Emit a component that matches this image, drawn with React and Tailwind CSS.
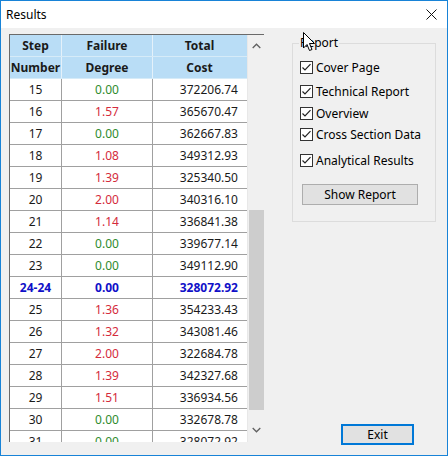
import React from 'react'

const rows = [
  ['15', '0.00', '372206.74', 'g'],
  ['16', '1.57', '365670.47', 'r'],
  ['17', '0.00', '362667.83', 'g'],
  ['18', '1.08', '349312.93', 'r'],
  ['19', '1.39', '325340.50', 'r'],
  ['20', '2.00', '340316.10', 'r'],
  ['21', '1.14', '336841.38', 'r'],
  ['22', '0.00', '339677.14', 'g'],
  ['23', '0.00', '349112.90', 'g'],
  ['24-24', '0.00', '328072.92', 'b'],
  ['25', '1.36', '354233.43', 'r'],
  ['26', '1.32', '343081.46', 'r'],
  ['27', '2.00', '322684.78', 'r'],
  ['28', '1.39', '342327.68', 'r'],
  ['29', '1.51', '336934.56', 'r'],
  ['30', '0.00', '332678.78', 'g'],
  ['31', '0.00', '328072.92', 'g'],
]

const options = [
  ['Cover Page', 'h-[24px]'],
  ['Technical Report', 'h-[22px]'],
  ['Overview', 'h-[21px]'],
  ['Cross Section Data', 'h-[26px]'],
  ['Analytical Results', 'h-[26px]'],
]

function Check() {
  return (
    <svg width="13" height="13" viewBox="0 0 13 13" className="shrink-0">
      <rect x="0.5" y="0.5" width="12" height="12" fill="#fff" stroke="#333" />
      <path d="M2.5 6.5 L5 9 L10.5 3.2" fill="none" stroke="#222" strokeWidth="1.2" />
    </svg>
  )
}

function HeaderRow({ cells }) {
  return (
    <div className="flex h-[22px] shrink-0 bg-[#b9ddf6] font-bold text-[#1a1a1a] border-b border-[#d6ebf8]">
      <div className="w-[52px] flex items-center justify-center border-r border-[#e4f1fa]">{cells[0]}</div>
      <div className="w-[91px] flex items-center justify-center border-r border-[#e4f1fa]">{cells[1]}</div>
      <div className="w-[93px] flex items-center justify-center">{cells[2]}</div>
    </div>
  )
}

export default function App() {
  return (
    <div
      className="relative w-[448px] h-[456px] border border-[#1883d7] bg-[#f0f0f0] flex flex-col overflow-hidden text-[12px] text-black"
      style={{ fontFamily: '"Noto Sans", "Open Sans", sans-serif' }}
    >
      {/* title bar */}
      <div className="h-[27px] bg-white flex items-center justify-between pl-[5px] pr-[10px] shrink-0">
        <span className="text-[12px]">Results</span>
        <svg width="11" height="11" viewBox="0 0 11 11">
          <path d="M0.5 0.5 L10.5 10.5 M10.5 0.5 L0.5 10.5" stroke="#111" strokeWidth="1" />
        </svg>
      </div>

      <div className="flex flex-1 min-h-0 pl-[8px] pt-[6px] pb-[10px]">
        {/* grid */}
        <div className="w-[255px] h-[408px] flex border-t border-l border-[#6a6a6a] bg-white overflow-hidden">
          <div className="w-[237px] flex flex-col overflow-hidden">
            <HeaderRow cells={['Step', 'Failure', 'Total']} />
            <HeaderRow cells={['Number', 'Degree', 'Cost']} />
            {rows.map(([step, deg, cost, c]) => {
              const bold = c === 'b'
              const degColor = c === 'g' ? 'text-[#2e8b2e]' : c === 'r' ? 'text-[#d42b3c]' : 'text-[#1010c8]'
              return (
                <div
                  key={step}
                  className={`flex h-[22px] shrink-0 border-b border-[#a0a0a0] ${bold ? 'font-bold text-[#1010c8]' : 'text-[#1a1a1a]'}`}
                >
                  <div className="w-[52px] flex items-center justify-center border-r border-[#a0a0a0]">{step}</div>
                  <div className={`w-[91px] flex items-center justify-center border-r border-[#a0a0a0] ${degColor}`}>{deg}</div>
                  <div className="w-[93px] flex items-center justify-end pr-[8px]">{cost}</div>
                </div>
              )
            })}
          </div>
          {/* scrollbar */}
          <div className="w-[17px] bg-[#f0f0f0] border-l border-[#e8e8e8] flex flex-col items-center">
            <div className="h-[17px] w-full flex items-center justify-center mt-[2px]">
              <svg width="9" height="6" viewBox="0 0 9 6">
                <path d="M0.7 5 L4.5 1.2 L8.3 5" fill="none" stroke="#606060" strokeWidth="1.3" />
              </svg>
            </div>
            <div className="mt-[156px] w-[15px] h-[200px] bg-[#cdcdcd]" />
            <div className="flex-1" />
            <div className="h-[17px] w-full flex items-center justify-center mb-[4px]">
              <svg width="9" height="6" viewBox="0 0 9 6">
                <path d="M0.7 1 L4.5 4.8 L8.3 1" fill="none" stroke="#606060" strokeWidth="1.3" />
              </svg>
            </div>
          </div>
        </div>

        {/* right panel */}
        <div className="flex-1 flex flex-col pl-[28px] pr-[10px]">
          <div className="relative mt-[9px] h-[179px] w-[144px] border border-[#dcdcdc] pt-[17px] pl-[7px]">
            <span className="absolute -top-[9px] left-[6px] bg-[#f0f0f0] px-[1px] leading-[16px]">Report</span>
            {options.map(([label, h]) => (
              <div key={label} className={`flex items-start gap-[3px] ${h}`}>
                <Check />
                <span className="leading-[14px]">{label}</span>
              </div>
            ))}
            <button className="mt-[4px] ml-[2px] w-[116px] h-[21px] border border-[#adadad] bg-[#e1e1e1] flex items-center justify-center">
              Show Report
            </button>
          </div>
          <div className="flex-1" />
          <div className="flex">
            <button className="ml-[49px] w-[73px] h-[21px] border-2 border-[#0078d7] bg-[#e1e1e1] flex items-center justify-center">
              Exit
            </button>
          </div>
        </div>
      </div>

      {/* mouse cursor */}
      <svg className="absolute left-[302px] top-[31px]" width="13" height="20" viewBox="0 0 13 20">
        <path d="M0.5 0.5 L0.5 16 L4 12.5 L6.5 18.5 L9 17.5 L6.5 11.5 L11.5 11.5 Z" fill="#fff" stroke="#000" strokeWidth="1" />
      </svg>
    </div>
  )
}
